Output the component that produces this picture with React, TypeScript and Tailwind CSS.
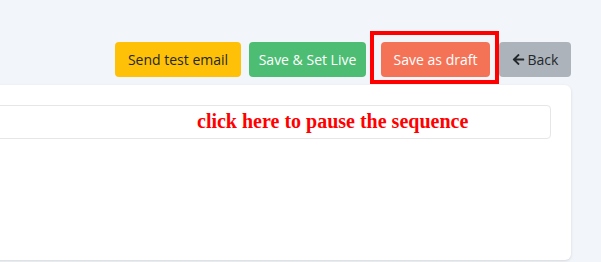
import { FaArrowLeft } from "react-icons/fa";

const btn =
  "flex h-[35px] items-center justify-center rounded-[4px] text-[14px] leading-none";

export default function App() {
  return (
    <div
      className="h-[262px] w-[601px] overflow-hidden bg-[#f2f5f9] pr-[30px]"
      style={{ fontFamily: '"Open Sans", "Noto Sans", sans-serif' }}
    >
      <div className="flex justify-end pt-[42px]">
        <button className={`${btn} w-[126px] bg-[#ffc107] text-[#23282c]`}>
          Send test email
        </button>
        <button className={`${btn} ml-[8px] w-[117px] bg-[#4dbd74] text-white`}>
          Save &amp; Set Live
        </button>
        <div className="relative ml-[15px]">
          <button className={`${btn} w-[109px] bg-[#f47357] text-white`}>
            Save as draft
          </button>
          <span className="pointer-events-none absolute -top-[11px] -right-[9px] -bottom-[7px] -left-[11px] border-4 border-[#ff0000]" />
        </div>
        <button className={`${btn} ml-[9px] w-[72px] gap-[3px] bg-[#adb3bb] text-[#23282c]`}>
          <FaArrowLeft className="h-[13px] w-[13px]" />
          Back
        </button>
      </div>

      <div className="-ml-[40px] mt-[8px] h-[175px] rounded-[6px] bg-white pt-[20px] pr-[20px] pl-[20px] shadow-[0_1px_3px_rgba(0,0,0,0.12)]">
        <div className="relative h-[34px] rounded-[4px] border border-[#e4e6e8]">
          <span
            className="absolute top-[5px] left-[216px] text-[20px] font-bold leading-none whitespace-nowrap text-[#ff0000]"
            style={{ fontFamily: '"Liberation Serif", serif' }}
          >
            click here to pause the sequence
          </span>
        </div>
      </div>
    </div>
  );
}
